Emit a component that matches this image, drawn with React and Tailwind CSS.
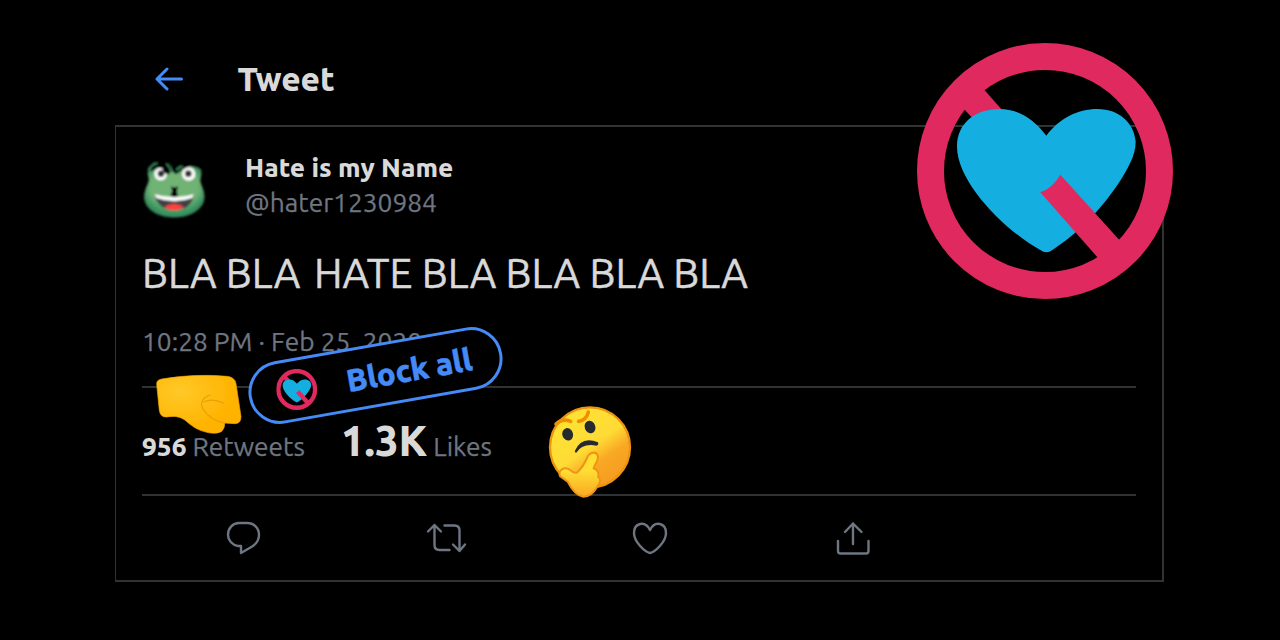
function BlockLogo({ className }) {
  return (
    <svg className={className} viewBox="51 39 768 768">
      <circle cx="435" cy="423" r="343.5" fill="none" stroke="#e0295e" strokeWidth="81" />
      <path d="M225 148L330 267L245 294L166 209Z" fill="#e0295e" />
      <path d="M439 317C400 266 353 237 299 237C225 237 171 280 171 350C171 458 318 604 421 660Q439 674 457 660C568 590 656 472 690 400Q707 366 707 335C703 282 660 237 592 237C532 237 477 266 439 317Z" fill="#14afe0" />
      <path d="M481 434L690 665L625 719L421 487Q458 474 481 434Z" fill="#e0295e" />
    </svg>
  );
}

function FrogAvatar({ className }) {
  return (
    <svg className={className} viewBox="0 0 270 255">
      <defs>
        <linearGradient id="frog" x1="0" y1="0" x2="0" y2="1">
          <stop offset="0" stopColor="#72b276" />
          <stop offset=".6" stopColor="#6fb475" />
          <stop offset="1" stopColor="#429965" />
        </linearGradient>
        <radialGradient id="frogEdge" cx=".5" cy=".45" r=".56">
          <stop offset=".7" stopColor="#3a8f62" stopOpacity="0" />
          <stop offset="1" stopColor="#2c8458" />
        </radialGradient>
        <path id="frogHead" d="M56 98C46 72 66 56 92 56Q112 58 118 76Q133 84 148 76Q155 58 176 56C204 55 220 74 212 98C206 112 223 128 223 155C223 192 181 217 133 217C84 217 43 192 43 155C43 128 60 112 56 98Z" />
        <filter id="frogSoft" x="-10%" y="-10%" width="120%" height="120%">
          <feGaussianBlur stdDeviation="2.6" />
        </filter>
      </defs>
      <g filter="url(#frogSoft)">
        <use href="#frogHead" fill="url(#frog)" />
        <use href="#frogHead" fill="url(#frogEdge)" />
        <circle cx="92" cy="87" r="19" fill="#fff" />
        <circle cx="176" cy="87" r="20" fill="#fff" />
        <circle cx="93" cy="86" r="10" fill="#333" />
        <circle cx="175" cy="86" r="10" fill="#333" />
        <path d="M60 80L68 50L106 50L122 82L116 88Q108 89 102 82L96 70L84 68L70 76Z" fill="#000" />
        <path d="M122 48L217 48L216 78L202 68L180 64L160 72L150 80L138 88L128 80Z" fill="#000" />
        <path d="M55 74Q65 58 82 54M110 56Q118 62 126 80M140 76Q147 65 158 65" stroke="#358558" strokeWidth="6" fill="none" />
        <path d="M122 124Q132 130 144 124L141 137L143 154L131 157L121 150L127 139Z" fill="#000" />
        <path d="M73 147Q133 168 192 147C187 181 166 195 133 195C99 195 79 177 73 147Z" fill="#404142" />
        <path d="M73 147Q133 167 192 147L187 159Q133 178 79 159Z" fill="#fff" />
        <path d="M104 188Q112 177 133 177Q153 177 161 188Q147 196 133 196Q117 196 104 188Z" fill="#ff4040" />
      </g>
    </svg>
  );
}

function Fist({ className }) {
  return (
    <svg className={className} viewBox="0 0 315 225">
      <defs>
        <radialGradient id="fist" cx=".28" cy=".28" r=".65">
          <stop offset="0" stopColor="#ffc928" />
          <stop offset="1" stopColor="#ffb300" />
        </radialGradient>
        <filter id="fistSoft"><feGaussianBlur stdDeviation="1.5" /></filter>
      </defs>
      <g filter="url(#fistSoft)">
        <path d="M35 58Q34 45 50 42Q150 25 246 34Q269 36 273 56L288 155Q288 176 269 176L239 174Q240 190 229 200Q207 210 175 199C154 193 145 185 131 175C113 157 97 151 64 156Q47 157 43 137Z" fill="url(#fist)" stroke="#f2a600" strokeWidth="2" />
        <path d="M196 90C173 97 163 114 175 134C188 154 211 169 239 174M177 111C195 101 215 105 235 114" fill="none" stroke="#eb9f00" strokeWidth="3.5" strokeLinecap="round" />
      </g>
    </svg>
  );
}

function Thinking({ className }) {
  return (
    <svg className={className} viewBox="0 0 330 330">
      <defs>
        <linearGradient id="face" x1=".3" y1=".1" x2=".85" y2=".9">
          <stop offset="0" stopColor="#ffe134" />
          <stop offset=".45" stopColor="#fedb35" />
          <stop offset=".68" stopColor="#f9a825" />
          <stop offset="1" stopColor="#f59b20" />
        </linearGradient>
        <linearGradient id="hand" x1="0" y1="0" x2="0" y2="1">
          <stop offset=".4" stopColor="#ffdf32" />
          <stop offset="1" stopColor="#f9a825" />
        </linearGradient>
        <filter id="faceSoft"><feGaussianBlur stdDeviation="2" /></filter>
      </defs>
      <g filter="url(#faceSoft)">
        <circle cx="165" cy="157" r="120" fill="url(#face)" stroke="#ee9410" strokeWidth="7" />
        <ellipse cx="98" cy="118" rx="16" ry="19" fill="#262b2e" transform="rotate(-20 98 118)" />
        <ellipse cx="165" cy="96" rx="16" ry="19" fill="#262b2e" transform="rotate(-20 165 96)" />
        <path d="M63 87Q82 69 107 79M131 79Q155 75 160 51" fill="none" stroke="#ef9000" strokeWidth="11" strokeLinecap="round" />
        <path d="M119 169Q139 122 189 142Q192 151 184 152Q142 144 123 174Z" fill="#262b2e" />
        <path d="M75 243C68 225 88 214 104 224Q117 237 127 232Q143 218 156 189C164 169 185 168 189 184C190 199 179 207 176 220Q194 227 190 246Q202 255 187 275C175 294 165 304 145 305C125 303 110 284 98 260Z" fill="url(#hand)" stroke="#ef9413" strokeWidth="6" />
      </g>
    </svg>
  );
}

function Icon({ className, children }) {
  return (
    <svg className={className} fill="none" stroke="#6e7681" strokeWidth="2.4" strokeLinecap="round" strokeLinejoin="round" viewBox="0 0 44 40">
      {children}
    </svg>
  );
}

export default function App() {
  return (
    <main className="relative h-[640px] w-[1280px] overflow-hidden bg-black pl-[115px] font-['Ubuntu','Noto_Sans',sans-serif] text-[#d9d9d9]">
      <header className="flex h-[125px] items-center pt-[32px] pl-[40px]">
        <svg className="h-6 w-7" viewBox="0 0 28 24" fill="none" stroke="#458bf7" strokeWidth="3" strokeLinecap="round" strokeLinejoin="round">
          <path d="M12 2L2 12L12 22M2 12H26.5" />
        </svg>
        <h1 className="ml-[54.500px] pt-px text-[33.3px] leading-10 font-extrabold whitespace-nowrap">Tweet</h1>
      </header>

      <article className="flex h-[457px] w-[1049px] flex-col border-2 border-l border-[#2f3336] pl-[26px] whitespace-nowrap">
        <div className="flex h-[106px] pt-6">
          <FrogAvatar className="-mt-[6px] -ml-[12px] h-[85px] w-[90px]" />
          <div className="ml-[25px] flex flex-col">
            <span className="h-[34px] text-[26.2px] leading-[34px] font-extrabold">Hate is my Name</span>
            <span className="h-[34px] text-[26.3px] leading-[34px] text-[#6e7681] [-webkit-text-stroke:0.25px]">@hater1230984</span>
          </div>
        </div>
        <p className="flex h-[80px] items-center pt-[2px] text-[40.9px] [-webkit-text-stroke:0.5px]">
          <span>BLA BLA</span>
          <span className="ml-[13.500px]">HATE BLA BLA BLA BLA</span>
        </p>
        <time className="flex h-[73px] items-center pb-[15px] text-[26.3px] text-[#6e7681] [-webkit-text-stroke:0.25px]">10:28 PM · Feb 25, 2020</time>
        <div className="flex h-[110px] w-[994px] items-baseline border-y-2 border-[#2f3336] pt-[25px] text-[26.3px] leading-[56px] text-[#6e7681]">
          <b className="font-extrabold text-[#d9d9d9]">956</b>
          <span className="ml-[6px] [-webkit-text-stroke:0.25px]">Retweets</span>
          <b className="ml-[36px] text-[42px] font-extrabold text-[#d9d9d9]">1.3K</b>
          <span className="ml-[6px] [-webkit-text-stroke:0.25px]">Likes</span>
        </div>
        <div className="flex h-[83px] items-center pl-[80px]">
          <Icon className="h-10 w-11">
            <path d="M17 5H25C32 5 37 10 37 17C37 22 35 25 31 28L19 35V28H16C10 27 6 22 6 17C6 10 11 5 17 5Z" />
          </Icon>
          <Icon className="ml-[158px] h-10 w-11">
            <path d="M4 13.5L10.500 7L17 13.500M10.500 7V27Q10.500 32 15.500 32H25.500M20.500 7.500H30.500Q35.500 7.500 35.500 12.500V33M29 26.500L35.500 33L41 26.500" />
          </Icon>
          <Icon className="ml-[160px] h-10 w-11">
            <path d="M22 12C17 2 6 5 6 15C6 24 17 34 22 35C27 34 38 24 38 15C38 5 27 2 22 12Z" />
          </Icon>
          <Icon className="ml-[159px] h-10 w-11">
            <path d="M14 14L22 5.500L30.500 14M22 5.500V26M7 23V33Q7 35.500 9.500 35.500H35Q37.500 35.500 37.500 33V23" />
          </Icon>
        </div>
      </article>

      <BlockLogo className="absolute top-[43px] left-[917px] h-64 w-64" />
      <div className="absolute top-[344px] left-[247px] flex h-[63px] w-[257px] -rotate-[10deg] items-center rounded-full border-[3px] border-[#458bf7] bg-black pl-[25px] text-[#458bf7]">
        <BlockLogo className="h-[41px] w-[41px] rotate-[10deg]" />
        <span className="ml-[30px] pt-px text-[31px] font-extrabold whitespace-nowrap [-webkit-text-stroke:0.5px]">Block all</span>
      </div>
      <Fist className="absolute top-[365px] left-[145px] h-[75px] w-[105px]" />
      <Thinking className="absolute top-[395px] left-[535px] h-[110px] w-[110px]" />
    </main>
  );
}
